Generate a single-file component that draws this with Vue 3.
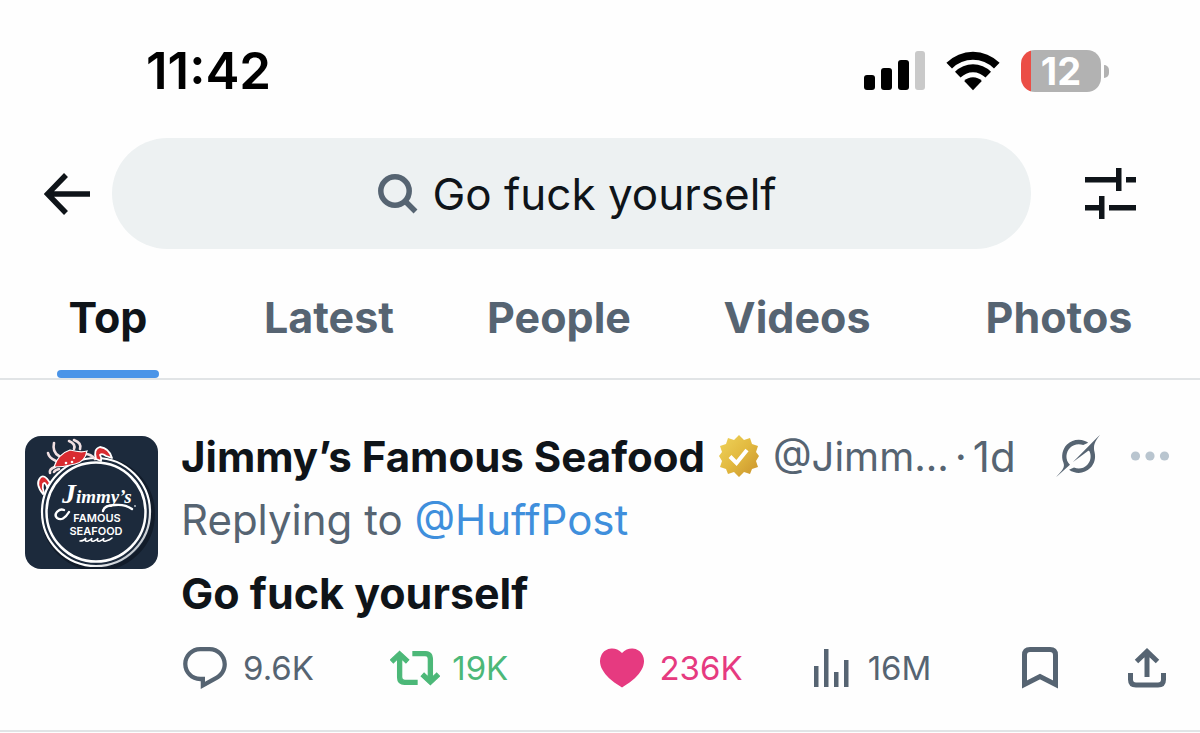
<script setup>
import { ref } from 'vue'

const query = ref('Go fuck yourself')
const tabs = ['Top', 'Latest', 'People', 'Videos', 'Photos']
const active = ref('Top')
</script>

<template>
  <div class="screen">
    <header class="status">
      <time class="clock">11:42</time>
      <div class="indicators">
        <svg width="61" height="40" viewBox="0 0 61 40" role="img" aria-label="Signal">
          <rect x="0" y="24" width="11" height="15" rx="3" />
          <rect x="17" y="17" width="11" height="22" rx="3" />
          <rect x="34" y="9" width="11" height="30" rx="3" />
          <rect x="51" y="0" width="10" height="39" rx="3" fill="#c9c9c9" />
        </svg>
        <svg width="54" height="40" viewBox="0 0 54 40" role="img" aria-label="Wi-Fi">
          <path d="M0.4 11.8A37.8 37.8 0 0 1 53.6 11.8L48 17.400A29.800 29.800 0 0 0 6 17.400Z" />
          <path d="M9 20.800A25.500 25.500 0 0 1 45 20.800L39.500 26.500A17.700 17.700 0 0 0 14.500 26.500Z" />
          <path d="M18.2 30A12.400 12.400 0 0 1 35.8 30L27 39.200Z" />
        </svg>
        <div class="battery-wrap">
          <div class="battery">12</div>
          <div class="nub"></div>
        </div>
      </div>
    </header>

    <form class="searchbar" @submit.prevent>
      <button class="icon-btn back" type="button" aria-label="Back">
        <svg width="46" height="42" viewBox="0 0 46 42" fill="none" stroke="#0f1419" stroke-width="5.500">
          <path d="M22 2L3.500 21L22 40M3.500 21H46" />
        </svg>
      </button>
      <label class="field">
        <svg width="40" height="40" viewBox="0 0 40 40" fill="none" stroke="#566472" stroke-width="5.500">
          <circle cx="17" cy="17" r="14.200" />
          <path d="M27 27L37.500 37.500" />
        </svg>
        <input v-model="query" type="text" aria-label="Search" />
      </label>
      <button class="icon-btn filter" type="button" aria-label="Filters">
        <svg width="51" height="52" viewBox="0 0 51 52" fill="#0f1419">
          <path d="M0 9H31V0H36.500V23H31V14.500H0ZM41 9H51V14.500H41ZM0 37H14V28H19.500V51H14V42.500H0ZM24 37H51V42.500H24Z" />
        </svg>
      </button>
    </form>

    <nav class="tabs">
      <button
        v-for="t in tabs"
        :key="t"
        type="button"
        class="tab"
        :class="{ on: t === active }"
        @click="active = t"
      >{{ t }}</button>
    </nav>

    <article class="post">
      <svg class="avatar" viewBox="0 0 133 133" role="img" aria-label="Jimmy’s Famous Seafood logo">
        <defs>
          <linearGradient id="rim" x1="0" y1="0" x2="1" y2="1">
            <stop offset="0.700" stop-color="#fff" />
            <stop offset="1" stop-color="#8d97a3" />
          </linearGradient>
        </defs>
        <rect width="133" height="133" fill="#1c2a3c" />
        <circle cx="73" cy="78" r="55" fill="none" stroke="#121c2a" stroke-width="4" />
        <circle cx="71" cy="76" r="54" fill="#1c2a3c" stroke="url(#rim)" stroke-width="2.200" />
        <circle cx="71" cy="76" r="49.500" fill="none" stroke="#fff" stroke-width="2.500" />
        <g fill="none" stroke="#f1dfe1" stroke-width="2.600" stroke-linecap="round">
          <path d="M31 25Q24 22 23 17M34 20Q27 16 29 7M49 13Q51 8 44 5M55 13Q57 7 49 4M30 31Q24 33 25 37M34 33Q30 34 29 36M60 18Q66 18 70 23" />
        </g>
        <path d="M29 31Q33 18 45 14Q56 17 62 15Q60 26 50 28Q39 31 29 31Z" fill="#d92b30" stroke="#fff" stroke-width="1.200" />
        <g fill="#fff"><circle cx="41" cy="27" r="1.300" /><circle cx="47" cy="26" r="1.300" /><circle cx="49" cy="22" r="1" /></g>
        <g stroke="#fff" stroke-width="1.800" stroke-linejoin="round" fill="#d92b30">
          <path d="M71 23Q68 13 75 11Q84 12 87 22L81 20Q77 17 75 19Q77 22 76 25Z" />
          <path d="M18 58Q10 48 15 42Q19 37 25 47L22 51Q20 45 18 48Q17 52 19 57Z" />
        </g>
        <g fill="none" stroke="#fff" stroke-linecap="round">
          <path d="M39 74C34 72 28 78 32 82Q38 86 44 76M78 75C79 70 84 69 90 69Q100 68 107 73" stroke-width="2.400" />
          <path d="M55 105q4 0 6-3q-2 4 2 3q3-1 4-3q-2 4 2 3q3-1 4-3q-2 4 2 3q3-1 4-3q-2 4 2 3q4-1 6-3" stroke-width="1.600" />
        </g>
        <text x="37" y="67" class="script"><tspan class="initial">J</tspan>immy’s</text>
        <text x="72" y="86" class="caps" text-anchor="middle">FAMOUS</text>
        <text x="71" y="99" class="caps" text-anchor="middle">SEAFOOD</text>
        <circle cx="110" cy="70" r="1" fill="#b8c0c8" />
      </svg>

      <div class="content">
        <div class="byline">
          <a class="name" href="#">Jimmy’s Famous Seafood</a>
          <svg class="badge" width="40" height="42" viewBox="0 0 40 42" role="img" aria-label="Verified">
            <defs>
              <linearGradient id="gold" x1="0" y1="0" x2="1" y2="1">
                <stop offset="0" stop-color="#efd45c" />
                <stop offset="0.500" stop-color="#e2b93f" />
                <stop offset="1" stop-color="#c8912c" />
              </linearGradient>
            </defs>
            <path fill="url(#gold)" d="M20 0L25 5L31 3L33 9L39 11L37 17L40 21L37 26L39 32L33 34L31 39L25 37L20 42L15 37L9 39L7 34L1 32L3 26L0 21L3 17L1 11L7 9L9 3L15 5Z" />
            <path d="M11 21.500L17.500 28L28 15" fill="none" stroke="#fff" stroke-width="4" />
          </svg>
          <a class="handle" href="#">@Jimm...</a>
          <span class="dot">·</span>
          <time class="age">1d</time>
          <button class="icon-btn grok" type="button" aria-label="Explain this post">
            <svg width="44" height="44" viewBox="0 0 33 32" fill="#566472">
              <path d="M12.745 20.540l10.970-8.190c.539-.4 1.307-.244 1.564.38 1.349 3.288.746 7.241-1.938 9.955-2.683 2.714-6.417 3.310-9.830 1.954l-3.728 1.745c5.347 3.697 11.840 2.782 15.898-1.324 3.219-3.255 4.216-7.692 3.284-11.693l.008.009c-1.351-5.878.332-8.227 3.782-13.031L33 0l-4.540 4.590v-.014L12.743 20.544m-2.263 1.987c-3.837-3.707-3.175-9.446.1-12.755 2.420-2.449 6.388-3.448 9.852-1.979l3.720-1.737c-.67-.49-1.530-1.017-2.515-1.387-4.455-1.854-9.789-.931-13.410 2.728-3.483 3.523-4.579 8.940-2.697 13.561 1.405 3.454-.899 5.898-3.220 8.364C1.490 30.200.666 31.074 0 32l10.478-9.466" />
            </svg>
          </button>
          <button class="icon-btn more" type="button" aria-label="More">
            <svg width="40" height="10" viewBox="0 0 40 10" fill="#b9c5cf">
              <circle cx="5.500" cy="5" r="4.600" /><circle cx="20" cy="5" r="4.600" /><circle cx="34.500" cy="5" r="4.600" />
            </svg>
          </button>
        </div>
        <p class="replying">Replying to <a href="#">@HuffPost</a></p>
        <p class="body">Go fuck yourself</p>
        <div class="actions">
          <button type="button" class="action reply">
            <svg width="44" height="42" viewBox="1.750 2 20.500 19.700">
              <path d="M1.751 10c0-4.420 3.584-8 8.005-8h4.366c4.490 0 8.129 3.640 8.129 8.130 0 2.960-1.607 5.680-4.196 7.110l-8.054 4.460v-3.690h-.067c-4.490.1-8.183-3.510-8.183-8.010zm8.005-6c-3.317 0-6.005 2.690-6.005 6 0 3.370 2.770 6.080 6.138 6.010l.351-.01h1.761v2.300l5.087-2.810c1.951-1.080 3.163-3.130 3.163-5.360 0-3.390-2.744-6.130-6.129-6.130H9.756z" />
            </svg>9.6K
          </button>
          <button type="button" class="action repost">
            <svg width="50" height="36" viewBox="-0.200 3.500 24.400 17">
              <path stroke="currentColor" stroke-width="0.600" d="M4.500 3.880l4.432 4.140-1.364 1.460L5.500 7.550V16.500c0 1.100.396 1.500 1.500 1.500H13v2H7c-2.209 0-3.500-1.290-3.500-3.500V7.550L1.432 9.480.068 8.020 4.500 3.880zM16.500 6H11V4h6c2.209 0 3.500 1.290 3.500 3.500v8.950l2.068-1.930 1.364 1.460-4.432 4.140-4.432-4.140 1.364-1.460 2.068 1.930V7.500c0-1.100-.396-1.500-1.500-1.500z" />
            </svg>19K
          </button>
          <button type="button" class="action like">
            <svg width="44" height="40" viewBox="2 3.500 20 17.700">
              <path d="M20.884 13.190c-1.351 2.480-4.001 5.120-8.379 7.670l-.503.3-.504-.3c-4.379-2.550-7.029-5.190-8.382-7.670-1.360-2.500-1.410-4.860-.514-6.670.887-1.790 2.647-2.910 4.601-3.010 1.651-.09 3.368.56 4.798 2.010 1.429-1.450 3.146-2.100 4.796-2.010 1.954.1 3.714 1.220 4.601 3.010.896 1.810.846 4.170-.514 6.670z" />
            </svg>236K
          </button>
          <button type="button" class="action views">
            <svg width="36" height="38" viewBox="0 0 36 38">
              <path d="M0 17H4.500V38H0ZM10 0H14.500V38H10ZM20 23H24.500V38H20ZM30 11H34.500V38H30Z" />
            </svg>16M
          </button>
          <button type="button" class="action" aria-label="Bookmark">
            <svg class="line" width="38" height="42" viewBox="0 0 38 42">
              <path d="M3.500 37.500V8Q3.500 2.500 9 2.500H29Q34.500 2.500 34.500 8V37.500L19 29.500Z" />
            </svg>
          </button>
          <button type="button" class="action" aria-label="Share">
            <svg class="line" width="38" height="40" viewBox="0 0 38 40">
              <path d="M2.500 25V31.500Q2.500 37 8 37H30Q35.500 37 35.500 31.500V25M19 29V4M8.500 13.500L19 3.500L29.500 13.500" />
            </svg>
          </button>
        </div>
      </div>
    </article>
  </div>
</template>

<style>
body {
  background: #fefefe;
}
</style>

<style scoped>
.screen {
  font-family: Inter, "Liberation Sans", sans-serif;
  color: #0f1419;
  overflow: hidden;
}
svg {
  display: block;
  flex: none;
}
button {
  font: inherit;
  color: inherit;
  background: none;
  border: 0;
  padding: 0;
}
a {
  color: inherit;
  text-decoration: none;
}
p {
  margin: 0;
}
.status {
  display: flex;
  justify-content: space-between;
  align-items: center;
  padding: 40px 91px 36px 146px;
}
.clock {
  font-size: 51px;
  line-height: 62px;
  font-weight: 600;
  color: #000;
}
.indicators {
  display: flex;
  align-items: center;
  gap: 21px;
}
.battery-wrap {
  display: flex;
  align-items: center;
  gap: 3px;
}
.battery {
  width: 80px;
  height: 42px;
  border-radius: 14px;
  background: linear-gradient(to right, #eb4e46 10px, #b2b2b2 10px);
  color: #fff;
  font-size: 38px;
  line-height: 42px;
  font-weight: 700;
  text-align: center;
}
.nub {
  width: 5px;
  height: 13px;
  border-radius: 0 6px 6px 0;
  background: #b2b2b2;
}
.searchbar {
  display: flex;
  align-items: center;
  padding: 0 64px 0 44px;
}
.back {
  margin-right: 22px;
}
.filter {
  margin-left: 54px;
}
.field {
  flex: 1;
  display: flex;
  align-items: center;
  justify-content: center;
  gap: 14px;
  height: 111px;
  padding-left: 12px;
  border-radius: 56px;
  background: #edf1f2;
}
.field input {
  field-sizing: content;
  border: 0;
  padding: 0;
  outline: 0;
  background: none;
  color: inherit;
  font: inherit;
  font-size: 44px;
  line-height: 60px;
}
.tabs {
  display: grid;
  grid-template-columns: 216fr 226fr 234fr 242fr 282fr;
  justify-items: center;
  border-bottom: 2px solid #e1e4e6;
}
.tab {
  position: relative;
  height: 129px;
  padding: 6px 12px 0;
  font-size: 43px;
  font-weight: 700;
  color: #566472;
}
.tab.on {
  color: #0f1419;
}
.tab.on::after {
  content: "";
  position: absolute;
  left: 0;
  right: 0;
  bottom: 0;
  height: 8px;
  border-radius: 4px;
  background: #4a94e8;
}
.post {
  display: flex;
  gap: 23px;
  padding: 46px 30px 26px 25px;
  border-bottom: 2px solid #e1e4e6;
}
.avatar {
  width: 133px;
  height: 133px;
  margin-top: 10px;
  border-radius: 16px;
}
.script {
  font-family: "Liberation Serif", serif;
  font-style: italic;
  font-weight: 700;
  font-size: 19px;
  fill: #fff;
}
.initial {
  font-size: 28px;
}
.caps {
  font-weight: 600;
  font-size: 11px;
  fill: #fff;
}
.content {
  flex: 1;
  min-width: 0;
}
.byline {
  display: flex;
  align-items: center;
  height: 60px;
  font-size: 42px;
  color: #566472;
  white-space: nowrap;
}
.name {
  font-weight: 700;
  color: #0f1419;
}
.badge {
  margin: 0 14px;
}
.handle {
  font-size: 40px;
}
.dot {
  margin: 0 6px;
}
.grok {
  margin-left: auto;
}
.more {
  margin-left: 30px;
}
.replying {
  font-size: 42px;
  line-height: 68px;
  color: #566472;
}
.replying a {
  color: #3f8fdc;
}
.body {
  font-size: 43px;
  line-height: 78px;
  font-weight: 700;
}
.actions {
  display: grid;
  grid-template-columns: 207fr 210fr 213fr 207fr 107fr 40fr;
  align-items: center;
  height: 72px;
  padding: 0 2px;
}
.action {
  display: flex;
  align-items: center;
  gap: 16px;
  font-size: 33px;
  color: #566472;
  fill: currentColor;
}
.repost {
  gap: 12px;
  color: #4cb878;
}
.like {
  gap: 15px;
  color: #e63a80;
}
.views {
  gap: 18px;
}
.line {
  fill: none;
  stroke: currentColor;
  stroke-width: 5px;
}
</style>
